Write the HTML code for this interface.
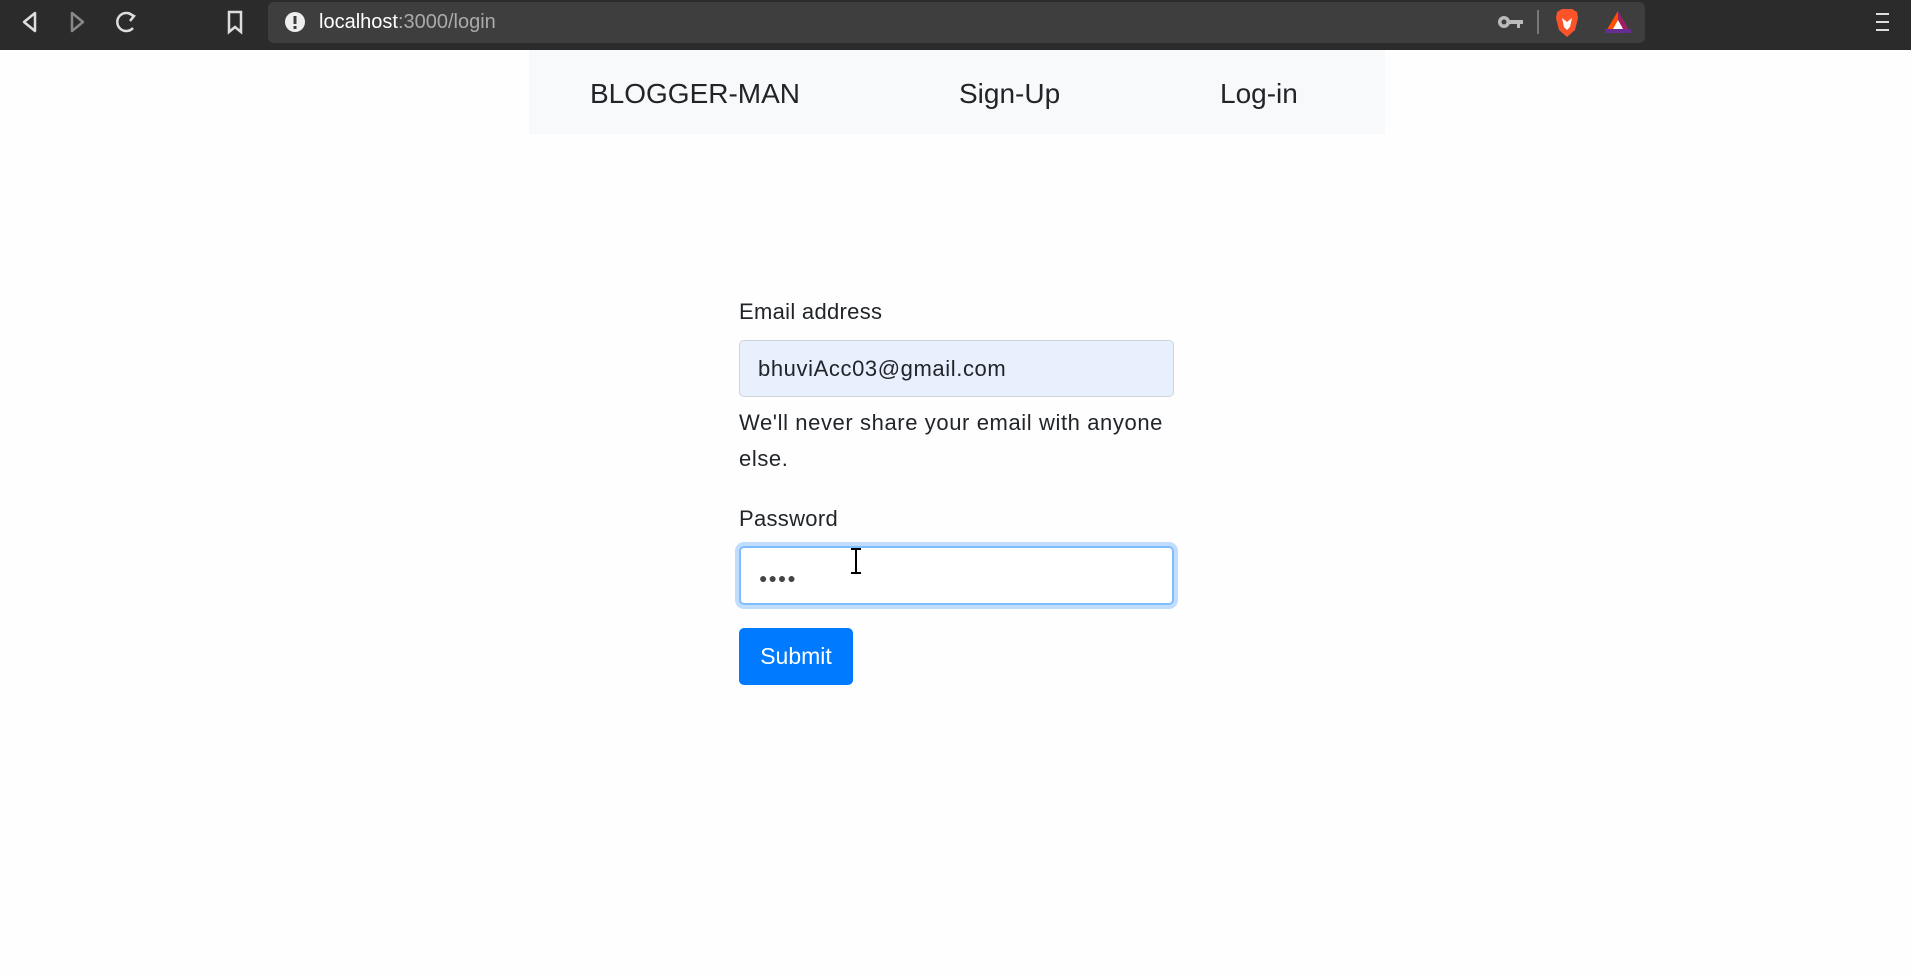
<!DOCTYPE html>
<html><head><style>
body{margin:0;width:1911px;height:978px;background:#fefefe;font-family:"Liberation Sans",sans-serif;position:relative;overflow:hidden;color:#212529}
.tb{position:absolute;left:0;top:0;width:1911px;height:50px;background:#2b2b2b}
.addr{position:absolute;left:268px;top:2px;width:1377px;height:41px;background:#3e3e3e;border-radius:6px}
.url{position:absolute;left:319px;top:11px;font-size:20px;color:#fff}
.url span{color:#aaa}
.nav{position:absolute;left:529px;top:50px;width:856px;height:84px;background:#f8f9fa}
.nav div{position:absolute;top:28px;font-size:28px;color:#212529}
.lbl{position:absolute;left:739px;font-size:22px;letter-spacing:0.3px}
.inp{position:absolute;left:739px;width:435px;height:57px;border:1px solid #ced4da;border-radius:5px;box-sizing:border-box}
.btn{position:absolute;left:739px;top:628px;width:114px;height:57px;background:#007bff;border-radius:5px;color:#fff;font-size:23px;line-height:57px;text-align:center}
</style></head><body>
<div class="tb">
<svg width="1911" height="50" style="position:absolute;left:0;top:0">
<path d="M35 13 L24 22 L35 31 Z" fill="none" stroke="#ddd" stroke-width="2.5" stroke-linejoin="round"/>
<path d="M72 13 L83 22 L72 31 Z" fill="none" stroke="#888" stroke-width="2.5" stroke-linejoin="round"/>
<path d="M133 16 A9 9 0 1 0 133 28" fill="none" stroke="#ddd" stroke-width="2.5"/>
<path d="M128 13 L134 16 L130 21" fill="none" stroke="#ddd" stroke-width="2.5"/>
<path d="M229 12 V32 L235 27 L241 32 V12 Z" fill="none" stroke="#ddd" stroke-width="2.5"/>
</svg>
<div class="addr"></div>
<svg width="22" height="22" style="position:absolute;left:284px;top:11px"><circle cx="11" cy="11" r="10" fill="#eee"/><rect x="9.5" y="5" width="3" height="8" fill="#3e3e3e"/><rect x="9.5" y="15" width="3" height="3" fill="#3e3e3e"/></svg>
<div class="url">localhost<span>:3000/login</span></div>
<svg width="30" height="20" style="position:absolute;left:1497px;top:12px"><circle cx="7" cy="10" r="6" fill="#bbb"/><circle cx="7" cy="10" r="2.5" fill="#3e3e3e"/><rect x="12" y="8" width="14" height="4" fill="#bbb"/><rect x="20" y="10" width="3" height="6" fill="#bbb"/></svg>
<div style="position:absolute;left:1537px;top:10px;width:2px;height:24px;background:#777"></div>
<svg width="26" height="30" style="position:absolute;left:1554px;top:8px"><path d="M3 4 L8 1 H18 L23 4 L24 10 L21 22 L13 29 L5 22 L2 10 Z" fill="#fb542b"/><path d="M8 10 L13 14 L18 10 L16 19 L13 22 L10 19 Z" fill="#fff"/></svg>
<svg width="30" height="26" style="position:absolute;left:1603px;top:9px"><path d="M15 2 L28 24 H2 Z" fill="#9e1f63"/><path d="M15 2 L2 24 H15 Z" fill="#ff5000"/><path d="M15 11 L20 20 H10 Z" fill="#fff"/><rect x="2" y="20" width="26" height="4" fill="#662d91"/></svg>
<div style="position:absolute;left:1876px;top:13px;width:13px;height:2px;background:#ddd;box-shadow:0 8px 0 #ddd,0 16px 0 #ddd"></div>
</div>
<div class="nav">
<div style="left:61px">BLOGGER-MAN</div>
<div style="left:430px">Sign-Up</div>
<div style="left:691px">Log-in</div>
</div>
<div class="lbl" style="top:299px">Email address</div>
<div class="inp" style="top:340px;background:#e8f0fe"></div>
<div class="lbl" style="top:356px;left:758px;font-size:22px;letter-spacing:0.6px">bhuviAcc03@gmail.com</div>
<div class="lbl" style="top:405px;line-height:36px;width:450px;letter-spacing:0.6px">We'll never share your email with anyone else.</div>
<div class="lbl" style="top:506px">Password</div>
<div class="inp" style="top:546px;height:59px;border:2px solid #80bdff;box-shadow:0 0 0 4px #c0ddfd;background:#fff"></div>
<div style="position:absolute;left:759px;top:570px;font-size:14px;letter-spacing:1px;color:#444">●●●●</div>
<svg width="16" height="26" style="position:absolute;left:848px;top:548px"><path d="M3 1 H13 M8 1 V25 M3 25 H13" stroke="#000" stroke-width="2"/></svg>
<div class="btn">Submit</div>
</body></html>
